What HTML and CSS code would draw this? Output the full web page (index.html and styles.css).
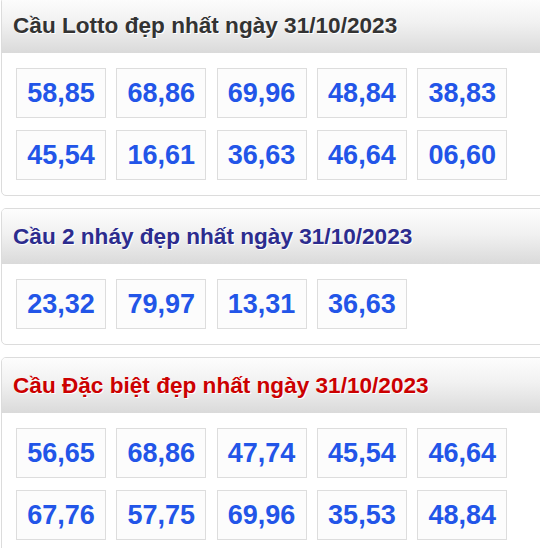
FILE: index.html
```html
<!DOCTYPE html>
<html lang="vi">
<head>
<meta charset="utf-8">
<title>Cầu đẹp nhất</title>
<link rel="stylesheet" href="styles.css">
</head>
<body>
<div class="wrap">
  <section class="panel">
    <h2 class="panel-title title-gray">Cầu Lotto đẹp nhất ngày 31/10/2023</h2>
    <div class="grid">
      <span class="num">58,85</span><span class="num">68,86</span><span class="num">69,96</span><span class="num">48,84</span><span class="num">38,83</span>
      <span class="num">45,54</span><span class="num">16,61</span><span class="num">36,63</span><span class="num">46,64</span><span class="num">06,60</span>
    </div>
  </section>
  <section class="panel">
    <h2 class="panel-title title-blue">Cầu 2 nháy đẹp nhất ngày 31/10/2023</h2>
    <div class="grid">
      <span class="num">23,32</span><span class="num">79,97</span><span class="num">13,31</span><span class="num">36,63</span>
    </div>
  </section>
  <section class="panel">
    <h2 class="panel-title title-red">Cầu Đặc biệt đẹp nhất ngày 31/10/2023</h2>
    <div class="grid">
      <span class="num">56,65</span><span class="num">68,86</span><span class="num">47,74</span><span class="num">45,54</span><span class="num">46,64</span>
      <span class="num">67,76</span><span class="num">57,75</span><span class="num">69,96</span><span class="num">35,53</span><span class="num">48,84</span>
    </div>
  </section>
</div>
</body>
</html>
```
FILE: styles.css
```css
html, body {
  margin: 0;
  padding: 0;
  overflow: hidden;
  background: #fff;
}
body {
  font-family: "Liberation Sans", Arial, sans-serif;
}
.wrap {
  margin-top: -3px;
  padding-left: 1px;
  width: 580px;
  display: flex;
  flex-direction: column;
  gap: 12px;
}
.panel {
  border: 1px solid #dcdcdc;
  border-radius: 5px;
  overflow: hidden;
  background: #fff;
}
.panel-title {
  margin: 0;
  height: 55px;
  line-height: 55px;
  padding-left: 11px;
  font-size: 22.6px;
  font-weight: bold;
  background: linear-gradient(to bottom, #fdfdfd 0%, #f1f1f1 45%, #dadada 100%);
  text-shadow: 1px 1px 0 #fff;
  white-space: nowrap;
}
.title-gray { color: #333333; }
.title-blue { color: #2c2c8e; }
.title-red { color: #cc0000; }
.grid {
  display: grid;
  grid-template-columns: repeat(5, 90px);
  column-gap: 10.3px;
  row-gap: 12px;
  padding: 15px 14px 15px 14px;
}
.num {
  box-sizing: border-box;
  height: 50px;
  border: 1px solid #dddddd;
  background: #fcfcfc;
  color: #2255e8;
  font-size: 27px;
  font-weight: bold;
  display: flex;
  align-items: center;
  justify-content: center;
}
```
